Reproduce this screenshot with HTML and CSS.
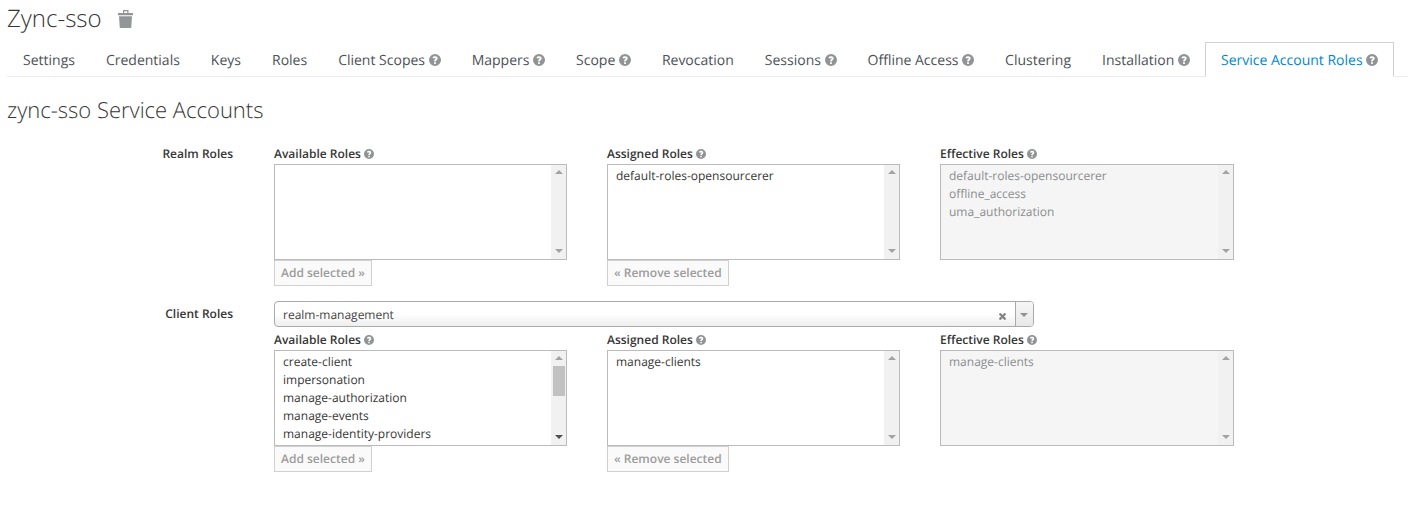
FILE: index.html
```html
<!DOCTYPE html>
<html lang="en">
<head>
<meta charset="utf-8">
<title>Zync-sso</title>
<link rel="stylesheet" href="styles.css">
</head>
<body>
<svg class="defs" width="0" height="0" aria-hidden="true">
  <symbol id="q" viewBox="0 0 24 24">
    <path fill-rule="evenodd" d="M12 0a12 12 0 1 0 0 24a12 12 0 0 0 0-24zM10.200 20v-3.400h3.600v3.400zM13.800 15h-3.400v-1.300c0-1.400.6-2.200 1.800-3c.9-.6 1.300-.9 1.300-1.600c0-.7-.6-1.200-1.500-1.200c-1 0-1.700.6-2.300 1.600L7 7.200C8 5.300 9.700 4.300 12.300 4.300c2.900 0 5.100 1.600 5.100 4.400c0 1.800-.9 2.700-2.200 3.600c-1 .7-1.400 1.100-1.400 2.700z"/>
  </symbol>
</svg>
<header class="title-row">
  <h1 class="title">Zync-sso</h1>
  <svg class="trash" viewBox="0 0 15 18" aria-hidden="true"><path fill-rule="evenodd" d="M5 0h5.500v3H15v2.300H0V3h5zM6.200 1.200V3h3.100V1.200zM1 6.200h13L13.200 18H1.800z"/></svg>
</header>
<nav class="tabs">
  <a class="tab">Settings</a>
  <a class="tab">Credentials</a>
  <a class="tab">Keys</a>
  <a class="tab">Roles</a>
  <a class="tab">Client Scopes <svg class="q"><use href="#q"/></svg></a>
  <a class="tab">Mappers <svg class="q"><use href="#q"/></svg></a>
  <a class="tab">Scope <svg class="q"><use href="#q"/></svg></a>
  <a class="tab">Revocation</a>
  <a class="tab">Sessions <svg class="q"><use href="#q"/></svg></a>
  <a class="tab">Offline Access <svg class="q"><use href="#q"/></svg></a>
  <a class="tab">Clustering</a>
  <a class="tab">Installation <svg class="q"><use href="#q"/></svg></a>
  <a class="tab active">Service Account Roles <svg class="q"><use href="#q"/></svg></a>
</nav>
<h2 class="subtitle">zync-sso Service Accounts</h2>
<form class="form">
  <div class="row">
    <div class="row-label">Realm Roles</div>
    <div class="col">
      <div class="col-label">Available Roles <svg class="q small"><use href="#q"/></svg></div>
      <div class="list">
        <div class="items"></div>
        <div class="sb"><span class="up"></span><span class="track"></span><span class="down"></span></div>
      </div>
      <button type="button" class="btn">Add selected »</button>
    </div>
    <div class="col">
      <div class="col-label">Assigned Roles <svg class="q small"><use href="#q"/></svg></div>
      <div class="list">
        <div class="items"><div>default-roles-opensourcerer</div></div>
        <div class="sb"><span class="up"></span><span class="track"></span><span class="down"></span></div>
      </div>
      <button type="button" class="btn">« Remove selected</button>
    </div>
    <div class="col">
      <div class="col-label">Effective Roles <svg class="q small"><use href="#q"/></svg></div>
      <div class="list disabled">
        <div class="items"><div>default-roles-opensourcerer</div><div>offline_access</div><div>uma_authorization</div></div>
        <div class="sb"><span class="up"></span><span class="track"></span><span class="down"></span></div>
      </div>
    </div>
  </div>
  <div class="row client-select">
    <div class="row-label">Client Roles</div>
    <div class="select">
      <span class="select-value">realm-management</span>
      <svg class="clear" viewBox="0 0 8 8" aria-hidden="true"><path d="M1.500 0L4 2.500L6.500 0L8 1.500L5.500 4L8 6.500L6.500 8L4 5.500L1.500 8L0 6.500L2.500 4L0 1.500z"/></svg>
      <span class="select-arrow"><span class="down"></span></span>
    </div>
  </div>
  <div class="row">
    <div class="row-label"></div>
    <div class="col">
      <div class="col-label">Available Roles <svg class="q small"><use href="#q"/></svg></div>
      <div class="list">
        <div class="items"><div>create-client</div><div>impersonation</div><div>manage-authorization</div><div>manage-events</div><div>manage-identity-providers</div></div>
        <div class="sb"><span class="up"></span><span class="track"><span class="thumb"></span></span><span class="down dark"></span></div>
      </div>
      <button type="button" class="btn">Add selected »</button>
    </div>
    <div class="col">
      <div class="col-label">Assigned Roles <svg class="q small"><use href="#q"/></svg></div>
      <div class="list">
        <div class="items"><div>manage-clients</div></div>
        <div class="sb"><span class="up"></span><span class="track"></span><span class="down"></span></div>
      </div>
      <button type="button" class="btn">« Remove selected</button>
    </div>
    <div class="col">
      <div class="col-label">Effective Roles <svg class="q small"><use href="#q"/></svg></div>
      <div class="list disabled">
        <div class="items"><div>manage-clients</div></div>
        <div class="sb"><span class="up"></span><span class="track"></span><span class="down"></span></div>
      </div>
    </div>
  </div>
</form>
</body>
</html>
```
FILE: styles.css
```css
* { box-sizing: border-box; }
html, body { margin: 0; padding: 0; }
body {
  width: 1408px;
  height: 518px;
  overflow: hidden;
  background: #fff;
  color: #363636;
  font-family: "Open Sans", sans-serif;
  font-size: 12px;
  padding-left: 7px;
  text-rendering: geometricPrecision;
}
.defs { position: absolute; }
.title-row { display: flex; align-items: center; height: 42px; padding-bottom: 5px; }
.title { margin: 0; font-size: 24px; font-weight: 300; line-height: 33px; color: #363636; }
.trash { width: 15px; height: 18px; margin-left: 16px; fill: #939597; }
.tabs {
  display: flex;
  height: 35px;
  width: 1401px;
  border-bottom: 1px solid #ededed;
}
.tab {
  display: flex;
  align-items: center;
  gap: 3.640px;
  height: 35px;
  padding: 1px 15px 0;
  margin-right: -1px;
  font-size: 14px;
  color: #4d5258;
  white-space: nowrap;
  border: 1px solid transparent;
}
.tab.active {
  color: #0088ce;
  background: #fff;
  border-color: #d1d1d1;
  border-bottom-color: #fff;
}
.q { width: 12px; height: 12px; fill: #919395; flex: none; }
.q.small { width: 10px; height: 10px; vertical-align: -1px; }
.subtitle { margin: 0; padding-top: 18px; font-size: 22px; font-weight: 300; line-height: 30px; color: #363636; height: 68px; }
.form { display: flex; flex-direction: column; }
.row { display: flex; gap: 40px; }
.row-label { width: 227px; padding-right: 1px; text-align: right; font-weight: 600; line-height: 17px; color: #363636; }
.col { width: 293px; }
.col:last-child { width: 294px; }
.col-label { font-weight: 600; height: 19px; line-height: 17px; }
.list {
  display: flex;
  width: 100%;
  height: 96px;
  border: 1px solid #bbb;
  background: #fff;
  font-size: 12px;
}
.items { flex: 1; padding: 2px 8px; line-height: 18px; color: #363636; overflow: hidden; }
.sb { width: 15px; display: flex; flex-direction: column; background: #f1f1f1; align-items: center; }
.track { flex: 1; width: 100%; }
.thumb { display: block; width: 12px; height: 30px; margin: 0 auto; background: #c1c1c1; }
.up, .down { display: block; width: 0; height: 0; border-left: 4px solid transparent; border-right: 4px solid transparent; }
.up { border-bottom: 4px solid #a3a3a3; margin-top: 5px; margin-bottom: 6px; }
.down { border-top: 4px solid #a3a3a3; margin-top: 5px; margin-bottom: 6px; }
.down.dark { border-top-color: #505050; }
.list.disabled { background: #f5f5f5; }
.list.disabled .items { color: #8b8d8f; }
.btn {
  display: block;
  height: 26px;
  padding: 0 6px 2px;
  font: 600 12px "Open Sans", sans-serif;
  text-rendering: geometricPrecision;
  color: #9c9c9c;
  background: #fafafa;
  border: 1px solid #d1d1d1;
}
.client-select { margin-top: 15px; margin-bottom: 4px; }
.client-select .row-label { line-height: 25px; }
.select {
  display: flex;
  align-items: center;
  width: 760px;
  height: 26px;
  border: 1px solid #aaa;
  border-radius: 4px;
  background: linear-gradient(#fff 0%, #fff 50%, #eee 100%);
  color: #444;
  padding-left: 8px;
}
.select-value { flex: 1; padding-top: 1px; }
.clear { width: 7px; height: 7px; fill: #808080; stroke: #808080; stroke-width: .6; margin: 4px 9px 0 0; }
.select-arrow { display: flex; align-items: center; justify-content: center; width: 18px; height: 100%; padding-right: 1px; border-left: 1px solid #aaa; border-radius: 0 3px 3px 0; background: linear-gradient(#f6f6f6, #e8e8e8); }
.select-arrow .down { margin: 2px 0 0; border-top-color: #909090; }
```
